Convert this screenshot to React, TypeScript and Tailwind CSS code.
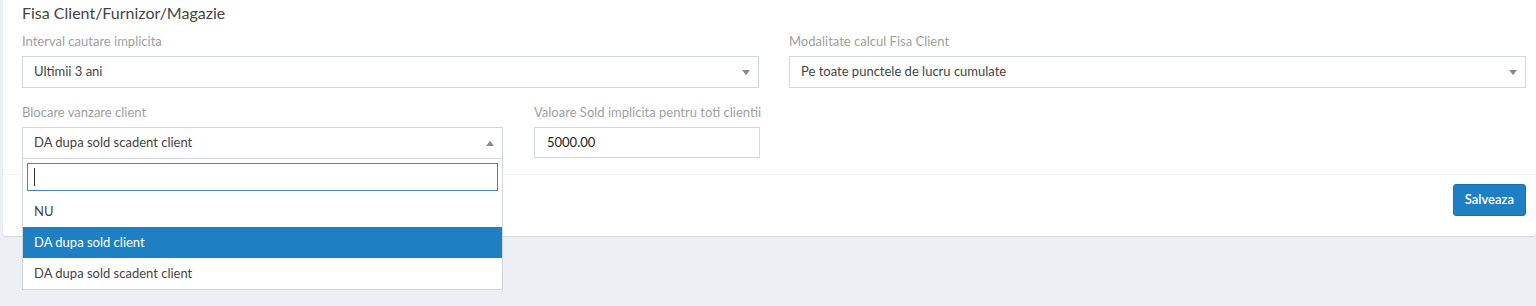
import { useState } from 'react';

const font = { fontFamily: '"Source Sans Pro", Lato, "Noto Sans", sans-serif' };

function Caret({ up = false }: { up?: boolean }) {
    return (
        <svg width="8" height="5" viewBox="0 0 8 5" className="shrink-0">
            {up ? <path d="M0 5 L4 0 L8 5 Z" fill="#888" /> : <path d="M0 0 L8 0 L4 5 Z" fill="#888" />}
        </svg>
    );
}

function Field({ label, width, children }: { label: string; width: string; children: React.ReactNode }) {
    return (
        <div className={width}>
            <label className="block whitespace-nowrap text-[13px] leading-[18px] text-[#9f9f9f] mb-[6px]">{label}</label>
            {children}
        </div>
    );
}

function SelectBox({ value }: { value: string }) {
    return (
        <div className="h-[32px] border border-[#d2d6de] bg-white flex items-center justify-between pl-[11px] pr-[8px] text-[13px] text-[#444]">
            <span>{value}</span>
            <Caret />
        </div>
    );
}

export default function App() {
    const options = ['NU', 'DA dupa sold client', 'DA dupa sold scadent client'];
    const [selected] = useState('DA dupa sold scadent client');
    const [hover] = useState('DA dupa sold client');

    return (
        <div className="min-h-[306px] w-[1536px] bg-[#ecf0f5] pl-[3px]" style={font}>
            <div className="bg-white rounded-b-[3px] shadow-[0_1px_1px_rgba(0,0,0,0.1)]">
                {/* header */}
                <div className="pl-[19px] pt-[3px] h-[32px]">
                    <h3 className="text-[16px] leading-[20px] text-[#444]">Fisa Client/Furnizor/Magazie</h3>
                </div>

                {/* body */}
                <div className="pl-[19px] pb-[15px]">
                    <div className="flex gap-[30px]">
                        <Field label="Interval cautare implicita" width="w-[737px]">
                            <SelectBox value="Ultimii 3 ani" />
                        </Field>
                        <Field label="Modalitate calcul Fisa Client" width="w-[737px]">
                            <SelectBox value="Pe toate punctele de lucru cumulate" />
                        </Field>
                    </div>

                    <div className="flex gap-[31px] mt-[15px]">
                        <Field label="Blocare vanzare client" width="w-[481px]">
                            <div className="relative">
                                <div className="h-[32px] border border-[#d2d6de] bg-white flex items-center justify-between pl-[11px] pr-[8px] text-[13px] text-[#444]">
                                    <span>{selected}</span>
                                    <Caret up />
                                </div>
                                {/* dropdown deschis */}
                                <div className="absolute left-0 top-[32px] w-full bg-white border border-t-0 border-[#d2d6de] z-10">
                                    <div className="p-[4px]">
                                        <div className="h-[28px] border border-[#3c8dbc] flex items-center pl-[6px]">
                                            <span className="w-px h-[18px] bg-[#333]" />
                                        </div>
                                    </div>
                                    <ul className="mt-[1px]">
                                        {options.map(opt => (
                                            <li
                                                key={opt}
                                                className={`h-[31px] flex items-center pl-[11px] text-[13px] ${opt === hover ? 'bg-[#1e7fc2] text-white' : 'text-[#444]'}`}
                                            >
                                                {opt}
                                            </li>
                                        ))}
                                    </ul>
                                </div>
                            </div>
                        </Field>
                        <Field label="Valoare Sold implicita pentru toti clientii" width="w-[226px]">
                            <div className="h-[31px] border border-[#d2d6de] bg-white flex items-center pl-[12px] text-[13px] text-[#222]">
                                5000.00
                            </div>
                        </Field>
                    </div>
                </div>

                {/* footer */}
                <div className="border-t border-[#f4f4f4] h-[62px] flex items-start justify-end pt-[9px] pr-[10px]">
                    <button className="h-[32px] px-[11px] rounded-[3px] bg-[#1e7fc2] border border-[#1a73b0] text-white text-[13px] font-semibold">
                        Salveaza
                    </button>
                </div>
            </div>
        </div>
    );
}
